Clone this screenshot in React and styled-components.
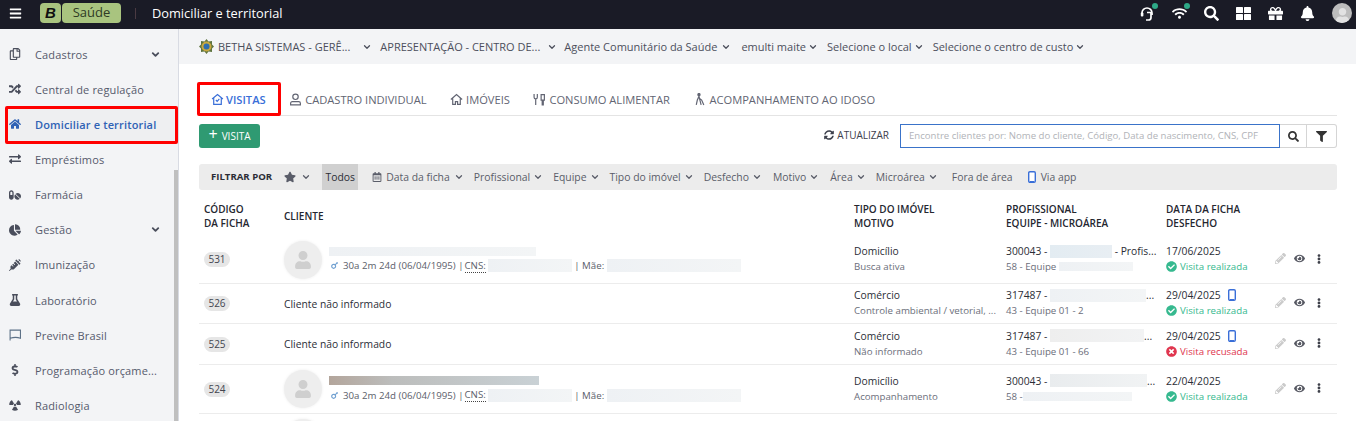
import React from 'react';
import styled, {createGlobalStyle} from 'styled-components';
import {
  FaBars, FaSearch, FaGift, FaBell, FaRegCopy, FaRandom, FaHome, FaExchangeAlt, FaPills,
  FaChartPie, FaSyringe, FaFlask, FaDollarSign, FaRadiation, FaStar, FaFilter, FaSyncAlt,
  FaRegCalendarAlt, FaPencilAlt, FaEye, FaEllipsisV, FaCheckCircle, FaTimesCircle, FaMars,
  FaWifi, FaUser,
} from 'react-icons/fa';
import {FiChevronDown} from 'react-icons/fi';

const GlobalStyle = createGlobalStyle`
  html, body {
    margin: 0;
    height: 100%;
    overflow: hidden;
    background: #fff;
    font-family: "Open Sans", "Liberation Sans", sans-serif;
    font-size: 11px;
    color: #2b2d36;
  }
  * { box-sizing: border-box; }
`;

const Page = styled.div`
  height: 421px;
  display: flex;
  flex-direction: column;
  overflow: hidden;
`;

/* barra superior */
const TopBar = styled.header`
  height: 29px;
  flex: none;
  background: #1a1b26;
  display: flex;
  align-items: center;
  padding: 0 4px 3px 9px;
  color: #fff;
`;
const MenuButton = styled.span`
  display: flex;
  font-size: 13px;
  margin-right: 18px;
`;
const Logo = styled.div`
  display: flex;
  height: 20px;
  width: 81px;
  gap: 1px;
`;
const LogoMark = styled.span`
  width: 21px;
  background: #a9c47f;
  border-radius: 4px;
  color: #111;
  font: italic 900 15px/20px "Liberation Sans", sans-serif;
  text-align: center;
`;
const LogoName = styled.span`
  flex: 1;
  background: #a9c47f;
  border-radius: 4px;
  color: #2f3a24;
  font-size: 13px;
  line-height: 19px;
  text-align: center;
`;
const TopDivider = styled.span`
  width: 1px;
  height: 11px;
  background: #4a3a42;
  margin: 0 16px 0 14px;
`;
const PageTitle = styled.h1`
  margin: 0;
  font-size: 12.8px;
  font-weight: 400;
  flex: 1;
`;
const TopIcons = styled.div`
  display: flex;
  align-items: center;
  gap: 17px;
  font-size: 15px;
`;
const TopIcon = styled.span`
  position: relative;
  display: flex;
`;
const StatusDot = styled.span`
  position: absolute;
  top: -3px;
  right: -3px;
  width: 6px;
  height: 6px;
  border-radius: 50%;
  background: #2ea987;
`;
const UserPhoto = styled.span`
  width: 20px;
  height: 20px;
  border-radius: 50%;
  background: #bdbdbd;
  color: #e2e2e2;
  overflow: hidden;
  display: flex;
  align-items: flex-end;
  justify-content: center;
  font-size: 15px;
`;

const Body = styled.div`
  flex: 1;
  display: flex;
  min-height: 0;
`;

/* menu lateral */
const Sidebar = styled.nav`
  position: relative;
  width: 179px;
  flex: none;
  background: #f3f4f6;
  border-right: 1px solid #d8dbe3;
  padding-top: 7.5px;
  overflow: hidden;
`;
const SideScroll = styled.span`
  position: absolute;
  right: 0;
  top: 141px;
  bottom: 0;
  width: 4px;
  background: #bfbfbf;
`;
const NavItem = styled.a`
  position: relative;
  height: 35.15px;
  display: flex;
  align-items: center;
  margin-left: 5px;
  padding: 0 17px 0 4px;
  font-size: 11px;
  letter-spacing: 0.15px;
  color: ${p => (p.$active ? '#2f62b5' : '#565a6c')};
  font-weight: ${p => (p.$active ? 600 : 400)};
  background: ${p => (p.$active ? '#eeeff1' : 'transparent')};
  ${p => p.$active && `
    &::after {
      content: '';
      position: absolute;
      inset: -1px 0 -2px;
      border: 3px solid #f00;
      border-radius: 2px;
    }
  `}
`;
const NavIcon = styled.span`
  width: 26px;
  flex: none;
  display: flex;
  font-size: 12px;
  color: ${p => (p.$active ? '#2f62b5' : '#4a4e5c')};
`;
const NavLabel = styled.span`
  flex: 1;
  white-space: nowrap;
`;
const NavChevron = styled(FiChevronDown)`
  font-size: 11px;
  stroke-width: 4;
  color: #4a4e5c;
`;

const Main = styled.main`
  flex: 1;
  min-width: 0;
  display: flex;
  flex-direction: column;
`;

/* contexto */
const ContextBar = styled.div`
  height: 35px;
  flex: none;
  background: #f3f4f6;
  display: flex;
  align-items: center;
  padding-left: 20px;
  color: #4c4f5c;
  font-size: 11px;
`;
const Crest = styled.svg`
  width: 15px;
  height: 15px;
  margin-right: 4px;
`;
const ContextItem = styled.span`
  display: flex;
  align-items: center;
  white-space: nowrap;
  gap: ${p => p.$gap || 2}px;
  margin-right: ${p => p.$after || 9}px;
`;
const SmallChevron = styled(FiChevronDown)`
  font-size: 10px;
  stroke-width: 3;
  flex: none;
`;

const Content = styled.div`
  flex: 1;
  padding: 19px 19px 0 20px;
`;

/* abas */
const Tabs = styled.div`
  height: 33px;
  display: flex;
  align-items: center;
  border-bottom: 1px solid #e4e4e4;
  padding-left: 12px;
  gap: 23.5px;
`;
const Tab = styled.a`
  position: relative;
  display: flex;
  align-items: center;
  gap: ${p => (p.$active ? 2 : 3)}px;
  font-size: 11.15px;
  white-space: nowrap;
  color: ${p => (p.$active ? '#3a6fd8' : '#626573')};
  font-weight: ${p => (p.$active ? 600 : 400)};
  ${p => p.$active && `
    &::after {
      content: '';
      position: absolute;
      inset: -10px -15px -9px -14px;
      border: 3px solid #f00;
      border-radius: 2px;
    }
  `}
`;
const TabIcon = styled.svg`
  width: 13px;
  height: 13px;
  fill: none;
  stroke: currentColor;
  stroke-width: 1.1;
`;

/* ações */
const ActionRow = styled.div`
  display: flex;
  align-items: center;
  margin-top: 8px;
  height: 24px;
`;
const NewButton = styled.button`
  width: 61px;
  height: 24px;
  border: 0;
  border-radius: 3px;
  background: #2f9a72;
  color: #fff;
  font: 400 10px "Open Sans", sans-serif;
  display: flex;
  align-items: center;
  justify-content: center;
  gap: 4px;
  padding: 0;
`;
const Plus = styled.span`
  font-size: 16px;
  line-height: 16px;
  margin-top: -4px;
`;
const RefreshLink = styled.span`
  margin-left: auto;
  margin-right: 11px;
  display: flex;
  align-items: center;
  gap: 3px;
  font-size: 10px;
  color: #3d404c;
  margin-top: -3px;
`;
const SearchGroup = styled.div`
  width: 437px;
  height: 24px;
  display: flex;
`;
const SearchInput = styled.div`
  flex: 1;
  border: 1px solid #3a73c9;
  color: #b1b3b8;
  font-size: 9.6px;
  line-height: 22px;
  padding-left: 8px;
  white-space: nowrap;
  overflow: hidden;
`;
const SearchButton = styled.span`
  width: ${p => p.$w}px;
  display: flex;
  align-items: center;
  justify-content: center;
  border: 1px solid #d5d5d5;
  border-left: 0;
  font-size: 11px;
  color: #333;
  border-radius: ${p => (p.$last ? '0 3px 3px 0' : '0')};
`;

/* filtros */
const FilterBar = styled.div`
  height: 26px;
  margin-top: 16px;
  background: #ececec;
  border-radius: 3px;
  display: flex;
  align-items: stretch;
  padding-left: 12px;
  font-size: 10.4px;
  color: #5a5d69;
`;
const FilterTitle = styled.strong`
  font-size: 9.6px;
  font-weight: 700;
  color: #2b2d36;
  display: flex;
  align-items: center;
  margin-right: 12px;
  margin-top: -2px;
`;
const FilterItem = styled.span`
  display: flex;
  align-items: center;
  gap: ${p => p.$gap || 3}px;
  white-space: nowrap;
  margin-right: ${p => p.$after || 10}px;
`;
const AllFilter = styled.span`
  width: 36px;
  background: #d0d0d0;
  color: #2b2d36;
  display: flex;
  align-items: center;
  justify-content: center;
  margin-right: 14px;
`;
const StarIcon = styled(FaStar)`
  font-size: 12px;
`;
const CalendarIcon = styled(FaRegCalendarAlt)`
  font-size: 10px;
`;

/* tabela */
const columns = '80px 570px 152px 160px 109px 1fr';
const HeadRow = styled.div`
  display: grid;
  grid-template-columns: ${columns};
  align-items: center;
  height: 46px;
  padding: 7px 0 0 5px;
  font-size: 10px;
  font-weight: 600;
  line-height: 13.5px;
  color: #24262f;
`;
const Row = styled.div`
  display: grid;
  grid-template-columns: ${columns};
  align-items: center;
  height: ${p => p.$h}px;
  padding-left: 5px;
  border-bottom: 1px solid #ececec;
`;
const CodePill = styled.span`
  justify-self: start;
  width: 26px;
  height: 15px;
  border-radius: 8px;
  background: #e6e6e6;
  color: #43454f;
  font-size: 10px;
  line-height: 15px;
  text-align: center;
`;
const ClientCell = styled.div`
  display: flex;
  align-items: center;
  gap: 7px;
  color: #2b2d36;
  font-size: 10.3px;
`;
const Avatar = styled.span`
  width: 38px;
  height: 38px;
  flex: none;
  border-radius: 50%;
  background: #eeeeee;
  box-shadow: 0 0 3px rgba(0, 0, 0, 0.08);
  color: #cfcfcf;
  display: flex;
  align-items: center;
  justify-content: center;
  font-size: 18px;
`;
const ClientInfo = styled.div`
  display: flex;
  flex-direction: column;
  gap: 3px;
`;
const Blur = styled.span`
  display: inline-block;
  flex: none;
  width: ${p => p.$w}px;
  height: ${p => p.$h || 13}px;
  background: ${p => p.$bg || 'linear-gradient(90deg, #eef1f4, #f3f5f6)'};
`;
const ClientMeta = styled.div`
  display: flex;
  align-items: center;
  font-size: 9.7px;
  color: #5b5e6a;
  white-space: nowrap;
`;
const Gender = styled(FaMars)`
  color: #6f9fd0;
  font-size: 9px;
  margin: 0 4px 0 1px;
`;
const Dotted = styled.span`
  border-bottom: 1px dotted #444;
  margin-left: 1px;
  margin-right: 2px;
`;
const Stack = styled.div`
  display: flex;
  flex-direction: column;
  gap: 2px;
  margin-top: -2px;
  white-space: nowrap;
  min-width: 0;
`;
const MainLine = styled.div`
  display: flex;
  align-items: center;
  font-size: 10.3px;
  line-height: 14px;
  color: #2b2d36;
`;
const SubLine = styled.div`
  display: flex;
  align-items: center;
  font-size: 9.7px;
  line-height: 13px;
  color: ${p => p.$color || '#6b6e7a'};
  gap: ${p => p.$gap || 0}px;
`;
const StatusOk = styled(FaCheckCircle)`
  font-size: 11px;
`;
const StatusRefused = styled(FaTimesCircle)`
  font-size: 11px;
`;
const Actions = styled.div`
  display: flex;
  align-items: center;
  color: #565862;
  font-size: 11px;
  gap: 8px;
  margin-top: -2px;
`;
const Pencil = styled(FaPencilAlt)`
  color: #cbcbcb;
`;
const Dots = styled(FaEllipsisV)`
  font-size: 10px;
  margin-left: 1px;
  color: #3e404a;
`;
const PhoneGlyph = styled.svg`
  width: 8px;
  height: 12px;
  margin-left: 7px;
`;

function Phone() {
  return (
    <PhoneGlyph viewBox="0 0 8 12">
      <rect x="0.7" y="0.7" width="6.6" height="10.6" rx="1.2" fill="#fff" stroke="#3a6fd8" strokeWidth="1.4" />
      <rect x="2" y="10" width="4" height="1.4" fill="#3a6fd8" />
    </PhoneGlyph>
  );
}

function HeadsetIcon() {
  return (
    <svg width="15" height="15" viewBox="0 0 15 15" fill="none" stroke="#fff" strokeWidth="1.7">
      <path d="M2 9V7a5 5 0 0 1 10 0v2" />
      <rect x="0.8" y="6.5" width="2.6" height="4" rx="1" fill="#fff" stroke="none" />
      <path d="M7 6.5h4v5a2.5 2.5 0 0 1-2.5 2.5H6" />
    </svg>
  );
}

function WindowsIcon() {
  return (
    <svg width="15" height="13" viewBox="0 0 15 13" fill="#fff">
      <rect x="0" y="0" width="7" height="6" rx="0.6" />
      <rect x="8" y="0" width="7" height="6" rx="0.6" />
      <rect x="0" y="7" width="7" height="6" rx="0.6" />
      <rect x="8" y="7" width="7" height="6" rx="0.6" />
    </svg>
  );
}

const navItems = [
  {label: 'Cadastros', icon: <FaRegCopy />, more: true},
  {label: 'Central de regulação', icon: <FaRandom />},
  {label: 'Domiciliar e territorial', icon: <FaHome />, active: true},
  {label: 'Empréstimos', icon: <FaExchangeAlt />},
  {label: 'Farmácia', icon: <FaPills />},
  {label: 'Gestão', icon: <FaChartPie />, more: true},
  {label: 'Imunização', icon: <FaSyringe />},
  {label: 'Laboratório', icon: <FaFlask />},
  {
    label: 'Previne Brasil',
    icon: (
      <svg width="12" height="12" viewBox="0 0 11 11" fill="none" stroke="#5d7187" strokeWidth="1">
        <path d="M1 10.500V1h9.500v7.500C8 7.500 4 7.500 1 8.500" />
      </svg>
    ),
  },
  {label: 'Programação orçame...', icon: <FaDollarSign />},
  {label: 'Radiologia', icon: <FaRadiation />},
];

const rows = [
  {
    h: 48, code: '531', client: {bar: 207},
    tipo: 'Domicílio', motivo: 'Busca ativa',
    prof: <>300043 -&nbsp;<Blur $w={62} $bg="linear-gradient(90deg,#e3ecf2,#e8eef3)" />&nbsp;- Profis...</>,
    equipe: <>58 - Equipe&nbsp;<Blur $w={74} $h={9} /></>,
    date: '17/06/2025', ok: true,
  },
  {
    h: 40, code: '526', tipo: 'Comércio', motivo: 'Controle ambiental / vetorial, ...',
    prof: <>317487 -&nbsp;<Blur $w={96} />...</>,
    equipe: '43 - Equipe 01 - 2',
    date: '29/04/2025', app: true, ok: true,
  },
  {
    h: 41, code: '525', tipo: 'Comércio', motivo: 'Não informado',
    prof: <>317487 -&nbsp;<Blur $w={94} $bg="linear-gradient(90deg,#eeeeee,#f2f3f4)" />...</>,
    equipe: '43 - Equipe 01 - 66',
    date: '29/04/2025', app: true, ok: false,
  },
  {
    h: 49, code: '524', client: {bar: 210, bg: 'linear-gradient(90deg,#b3a59b,#bcbdbc 30%,#c9d1d5)'},
    tipo: 'Domicílio', motivo: 'Acompanhamento',
    prof: <>300043 -&nbsp;<Blur $w={97} $bg="linear-gradient(90deg,#e9ecee,#f1f3f4)" />...</>,
    equipe: <>58 -<Blur $w={109} $h={9} /></>,
    date: '22/04/2025', ok: true,
  },
];

const filters = [
  {label: 'Profissional'}, {label: 'Equipe'}, {label: 'Tipo do imóvel'}, {label: 'Desfecho', after: 11},
  {label: 'Motivo', after: 11}, {label: 'Área'}, {label: 'Microárea', after: 14},
];

export default function App() {
  return (
    <Page>
      <GlobalStyle />
      <TopBar>
        <MenuButton><FaBars /></MenuButton>
        <Logo>
          <LogoMark>B</LogoMark>
          <LogoName>Saúde</LogoName>
        </Logo>
        <TopDivider />
        <PageTitle>Domiciliar e territorial</PageTitle>
        <TopIcons>
          <TopIcon><HeadsetIcon /><StatusDot /></TopIcon>
          <TopIcon><FaWifi /><StatusDot /></TopIcon>
          <TopIcon><FaSearch /></TopIcon>
          <TopIcon><WindowsIcon /></TopIcon>
          <TopIcon><FaGift /></TopIcon>
          <TopIcon><FaBell /></TopIcon>
          <UserPhoto><FaUser /></UserPhoto>
        </TopIcons>
      </TopBar>
      <Body>
        <Sidebar>
          {navItems.map(item => (
            <NavItem key={item.label} $active={item.active}>
              <NavIcon $active={item.active}>{item.icon}</NavIcon>
              <NavLabel>{item.label}</NavLabel>
              {item.more && <NavChevron />}
            </NavItem>
          ))}
          <SideScroll />
        </Sidebar>
        <Main>
          <ContextBar>
            <Crest viewBox="0 0 15 15">
              <polygon points="7.5,0 9.5,2.5 13,2 13,5.500 15,7.500 13,9.500 13,13 9.500,12.500 7.500,15 5.500,12.500 2,13 2,9.500 0,7.500 2,5.500 2,2 5.500,2.500" fill="#5f7440" />
              <circle cx="7.5" cy="7.5" r="5" fill="#c9a93f" />
              <circle cx="7.5" cy="7.5" r="3" fill="#2f6fb0" />
            </Crest>
            <ContextItem $gap={12} $after={8}>BETHA SISTEMAS - GERÊ...<SmallChevron /></ContextItem>
            <ContextItem $gap={7} $after={7}>APRESENTAÇÃO - CENTRO DE...<SmallChevron /></ContextItem>
            <ContextItem $gap={4} $after={10}>Agente Comunitário da Saúde<SmallChevron /></ContextItem>
            <ContextItem>emulti maite<SmallChevron /></ContextItem>
            <ContextItem>Selecione o local<SmallChevron /></ContextItem>
            <ContextItem>Selecione o centro de custo<SmallChevron /></ContextItem>
          </ContextBar>
          <Content>
            <Tabs>
              <Tab $active>
                <TabIcon viewBox="0 0 12 12">
                  <path d="M1 5.5 6 1.5l5 4M2.5 4.5v6h7v-6" />
                  <path d="M4.5 6.5 5.7 7.700 7.700 5.500" />
                </TabIcon>
                VISITAS
              </Tab>
              <Tab>
                <TabIcon viewBox="0 0 12 12">
                  <circle cx="6" cy="3.500" r="2.500" />
                  <path d="M1.500 11V9.500A1.500 1.500 0 0 1 3 8h6a1.500 1.500 0 0 1 1.500 1.500V11z" />
                </TabIcon>
                CADASTRO INDIVIDUAL
              </Tab>
              <Tab>
                <TabIcon viewBox="0 0 12 12">
                  <path d="M.8 6 6 1.500 11.200 6M2.500 5v5.500h2.500V8h2v2.500h2.500V5" />
                </TabIcon>
                IMÓVEIS
              </Tab>
              <Tab>
                <TabIcon viewBox="0 0 12 12">
                  <path d="M1 1v3a1.500 1.500 0 0 0 3 0V1M2.500 5.500V11M7.500 1.500h3v5h-1V11h-1V6.500h-1z" />
                </TabIcon>
                CONSUMO ALIMENTAR
              </Tab>
              <Tab>
                <TabIcon viewBox="0 0 12 12">
                  <circle cx="5.500" cy="1.500" r="1" fill="currentColor" />
                  <path d="M5.500 3 4 6.500l-1 4.500M5.500 3l1 4 1 4M5.500 4.500 8 6.500l2 4.500" />
                </TabIcon>
                ACOMPANHAMENTO AO IDOSO
              </Tab>
            </Tabs>
            <ActionRow>
              <NewButton><Plus>+</Plus>VISITA</NewButton>
              <RefreshLink><FaSyncAlt />ATUALIZAR</RefreshLink>
              <SearchGroup>
                <SearchInput>Encontre clientes por: Nome do cliente, Código, Data de nascimento, CNS, CPF</SearchInput>
                <SearchButton $w={27}><FaSearch /></SearchButton>
                <SearchButton $w={30} $last><FaFilter /></SearchButton>
              </SearchGroup>
            </ActionRow>
            <FilterBar>
              <FilterTitle>FILTRAR POR</FilterTitle>
              <FilterItem $gap={5} $after={11}><StarIcon /><SmallChevron /></FilterItem>
              <AllFilter>Todos</AllFilter>
              <FilterItem $gap={4}>
                <CalendarIcon />Data da ficha<SmallChevron />
              </FilterItem>
              {filters.map(f => (
                <FilterItem key={f.label} $after={f.after}>{f.label}<SmallChevron /></FilterItem>
              ))}
              <FilterItem $after={8}>Fora de área</FilterItem>
              <FilterItem $gap={5}><Phone />Via app</FilterItem>
            </FilterBar>
            <HeadRow>
              <div>CÓDIGO<br />DA FICHA</div>
              <div>CLIENTE</div>
              <div>TIPO DO IMÓVEL<br />MOTIVO</div>
              <div>PROFISSIONAL<br />EQUIPE - MICROÁREA</div>
              <div>DATA DA FICHA<br />DESFECHO</div>
              <div />
            </HeadRow>
            {rows.map(row => (
              <Row key={row.code} $h={row.h}>
                <CodePill>{row.code}</CodePill>
                {row.client ? (
                  <ClientCell>
                    <Avatar><FaUser /></Avatar>
                    <ClientInfo>
                      <Blur $w={row.client.bar} $h={9} $bg={row.client.bg} />
                      <ClientMeta>
                        <Gender />30a 2m 24d (06/04/1995) |<Dotted>CNS:</Dotted>
                        <Blur $w={84} />&nbsp;| Mãe:&nbsp;<Blur $w={134} />
                      </ClientMeta>
                    </ClientInfo>
                  </ClientCell>
                ) : (
                  <ClientCell>Cliente não informado</ClientCell>
                )}
                <Stack>
                  <MainLine>{row.tipo}</MainLine>
                  <SubLine>{row.motivo}</SubLine>
                </Stack>
                <Stack>
                  <MainLine>{row.prof}</MainLine>
                  <SubLine>{row.equipe}</SubLine>
                </Stack>
                <Stack>
                  <MainLine>{row.date}{row.app && <Phone />}</MainLine>
                  <SubLine $gap={3} $color={row.ok ? '#36b98f' : '#e0364f'}>
                    {row.ok ? <StatusOk /> : <StatusRefused />}
                    {row.ok ? 'Visita realizada' : 'Visita recusada'}
                  </SubLine>
                </Stack>
                <Actions>
                  <Pencil />
                  <FaEye />
                  <Dots />
                </Actions>
              </Row>
            ))}
            <Row $h={48}>
              <span />
              <ClientCell><Avatar><FaUser /></Avatar></ClientCell>
            </Row>
          </Content>
        </Main>
      </Body>
    </Page>
  );
}
